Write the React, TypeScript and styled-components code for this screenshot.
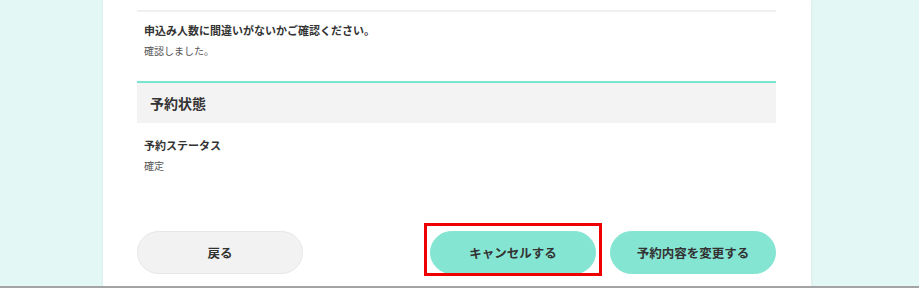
import styled, { createGlobalStyle } from "styled-components";

const GlobalStyle = createGlobalStyle`
  html, body {
    margin: 0;
    padding: 0;
    background: #e3f7f5;
  }
  body {
    font-family: "Noto Sans CJK JP", "Noto Sans", sans-serif;
    color: #333;
  }
`;

export default function App() {
  return (
    <>
      <GlobalStyle />
      <Page>
        <Panel>
          <Divider />
          <Item>
            <Label>申込み人数に間違いがないかご確認ください。</Label>
            <Value>確認しました。</Value>
          </Item>
          <SectionHeader>予約状態</SectionHeader>
          <Item $top={12}>
            <Label>予約ステータス</Label>
            <Value>確定</Value>
          </Item>
          <Actions>
            <Button $variant="gray">戻る</Button>
            <RightGroup>
              <Highlighted>
                <Button>キャンセルする</Button>
              </Highlighted>
              <Button>予約内容を変更する</Button>
            </RightGroup>
          </Actions>
        </Panel>
      </Page>
    </>
  );
}

const Page = styled.div`
  display: grid;
  grid-template-columns: 103px 708px 1fr;
  height: 286px;
  border-bottom: 2px solid #a4a4a4;
  overflow: hidden;
`;

const Panel = styled.main`
  grid-column: 2;
  background: #fff;
  padding: 10px 35px 0 34px;
  box-shadow: -1px 0 2px rgba(0, 0, 0, 0.04), 1px 0 2px rgba(0, 0, 0, 0.04);
`;

const Divider = styled.div`
  height: 2px;
  background: #f0f0f0;
`;

const Item = styled.div<{ $top?: number }>`
  padding: ${(p) => p.$top ?? 8}px 7px 0;
  height: ${(p) => (p.$top ? "auto" : "61px")};
`;

const Label = styled.div`
  font-size: 11px;
  font-weight: 700;
  line-height: 20px;
  color: #333;
`;

const Value = styled.div`
  font-size: 10px;
  line-height: 20px;
  color: #555;
  margin-top: 1px;
`;

const SectionHeader = styled.h2`
  margin: 0;
  border-top: 2px solid #7ae6d0;
  background: #f3f3f3;
  height: 40px;
  display: flex;
  align-items: center;
  padding-left: 13px;
  font-size: 14px;
  font-weight: 700;
  color: #333;
`;

const Actions = styled.div`
  display: flex;
  justify-content: space-between;
  align-items: center;
  margin-top: 55px;
`;

const RightGroup = styled.div`
  display: flex;
  gap: 14px;
`;

const Button = styled.button<{ $variant?: "gray" | "teal" }>`
  width: 166px;
  height: 43px;
  border-radius: 22px;
  font-family: inherit;
  font-size: 12.5px;
  font-weight: 700;
  color: #333;
  cursor: pointer;
  background: ${(p) => (p.$variant === "gray" ? "#f2f2f2" : "#85e5d3")};
  border: 1px solid ${(p) => (p.$variant === "gray" ? "#e6e6e6" : "#85e5d3")};
`;

const Highlighted = styled.div`
  position: relative;
  display: flex;

  &::after {
    content: "";
    position: absolute;
    top: -8px;
    bottom: -2px;
    left: -6px;
    right: -6px;
    border: 3px solid #ee0000;
    pointer-events: none;
  }
`;
